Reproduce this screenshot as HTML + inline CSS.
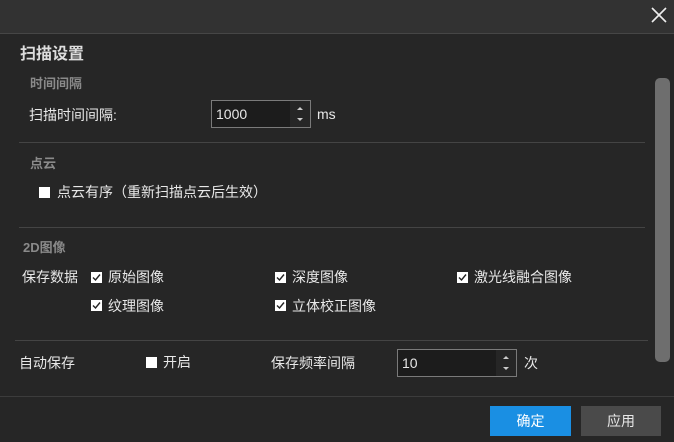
<!DOCTYPE html>
<html><head><meta charset="utf-8"><style>
body{margin:0;width:674px;height:442px;background:#262626;position:relative;overflow:hidden;font-family:"Liberation Sans","Noto Sans CJK SC",sans-serif;color:#e8e8e8;font-size:14px}
.a{position:absolute;white-space:nowrap}
.top{position:absolute;left:0;top:0;width:674px;height:33px;background:#323232;border-bottom:1px solid #464646}
.hr{position:absolute;height:1px;background:#444}
.g{color:#8a8a8a;font-weight:bold;font-size:13px}
.spin{position:absolute;background:#1c1c1c;border:1px solid #7a7a7a;box-sizing:border-box}
.spin span{position:absolute;left:4px;top:5px;font-size:14px}
.sb{position:absolute;right:0;top:0;width:20px;height:100%;background:#262626}
.sb i{position:absolute;left:7px;width:0;height:0;border-left:3px solid transparent;border-right:3px solid transparent}
.cb{position:absolute;width:11px;height:11px;background:#fff}
.cb svg{position:absolute;left:0;top:0}
.btn{position:absolute;top:406px;height:30px;width:81px;text-align:center;line-height:30px;font-size:14px}
</style></head><body>
<div class="top"></div>
<svg class="a" style="left:650px;top:6px" width="18" height="18"><path d="M2 2L16 16M16 2L2 16" stroke="#eee" stroke-width="1.6"/></svg>
<div class="a" style="left:20px;top:40px;font-size:16px;font-weight:bold;color:#ddd">扫描设置</div>
<div class="a g" style="left:30px;top:73px">时间间隔</div>
<div class="a" style="left:29px;top:105px">扫描时间间隔:</div>
<div class="spin" style="left:211px;top:100px;width:100px;height:28px"><span>1000</span><div class="sb"><i style="top:6px;border-bottom:3px solid #ccc"></i><i style="top:17px;border-top:3px solid #ccc"></i></div></div>
<div class="a" style="left:317px;top:106px;font-size:14px">ms</div>
<div class="hr" style="left:19px;top:142px;width:626px"></div>
<div class="a g" style="left:30px;top:153px">点云</div>
<div class="cb" style="left:39px;top:187px"></div>
<div class="a" style="left:57px;top:182px">点云有序（重新扫描点云后生效）</div>
<div class="hr" style="left:19px;top:227px;width:626px"></div>
<div class="a g" style="left:23px;top:237px">2D图像</div>
<div class="a" style="left:22px;top:267px">保存数据</div>
<div class="cb" style="left:91px;top:272px"><svg width="11" height="11"><path d="M2 5.5L4.5 8L9 2.5" stroke="#222" stroke-width="1.4" fill="none"/></svg></div>
<div class="a" style="left:108px;top:267px">原始图像</div>
<div class="cb" style="left:275px;top:272px"><svg width="11" height="11"><path d="M2 5.5L4.5 8L9 2.5" stroke="#222" stroke-width="1.4" fill="none"/></svg></div>
<div class="a" style="left:292px;top:267px">深度图像</div>
<div class="cb" style="left:457px;top:272px"><svg width="11" height="11"><path d="M2 5.5L4.5 8L9 2.5" stroke="#222" stroke-width="1.4" fill="none"/></svg></div>
<div class="a" style="left:474px;top:267px">激光线融合图像</div>
<div class="cb" style="left:91px;top:300px"><svg width="11" height="11"><path d="M2 5.5L4.5 8L9 2.5" stroke="#222" stroke-width="1.4" fill="none"/></svg></div>
<div class="a" style="left:108px;top:296px">纹理图像</div>
<div class="cb" style="left:275px;top:300px"><svg width="11" height="11"><path d="M2 5.5L4.5 8L9 2.5" stroke="#222" stroke-width="1.4" fill="none"/></svg></div>
<div class="a" style="left:292px;top:296px">立体校正图像</div>
<div class="hr" style="left:15px;top:340px;width:633px"></div>
<div class="a" style="left:19px;top:353px">自动保存</div>
<div class="cb" style="left:146px;top:357px"></div>
<div class="a" style="left:163px;top:352px">开启</div>
<div class="a" style="left:271px;top:353px">保存频率间隔</div>
<div class="spin" style="left:397px;top:349px;width:120px;height:28px"><span>10</span><div class="sb"><i style="top:6px;border-bottom:3px solid #ccc"></i><i style="top:17px;border-top:3px solid #ccc"></i></div></div>
<div class="a" style="left:524px;top:353px;font-size:14px">次</div>
<div class="a" style="left:655px;top:78px;width:15px;height:284px;background:#6e6e6e;border-radius:5px"></div>
<div class="hr" style="left:0;top:396px;width:674px;background:#3c3c3c"></div>
<div class="btn" style="left:490px;background:#1a8fe3;color:#fff">确定</div>
<div class="btn" style="left:581px;width:80px;background:#4a4a4a">应用</div>
</body></html>
